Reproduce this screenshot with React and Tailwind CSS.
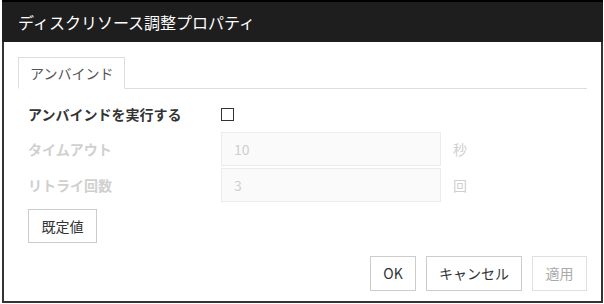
export default function App() {
  const font = { fontFamily: '"Noto Sans CJK JP", "Noto Sans", sans-serif' };
  return (
    <div className="w-[604px] h-[304px] bg-white overflow-hidden" style={font}>
      <div className="ml-[2px] w-[601px] flex flex-col">
        <div className="h-[42px] bg-[#1e1e1e] border-t-2 border-black flex items-center pl-[16px] text-white text-[16px] leading-none">
          ディスクリソース調整プロパティ
        </div>
        <div className="h-[261px] border-x-2 border-b-2 border-[#333] flex flex-col px-[14px] pt-[15px] pb-[10px]">
          <div className="flex border-b border-[#ddd]">
            <div className="h-[32px] -mb-px border border-[#ddd] border-b-white bg-white px-[11px] flex items-center text-[14px] text-[#555]">
              アンバインド
            </div>
          </div>
          <div className="pl-[10px] flex flex-col">
            <div className="h-[34px] mt-[8px] flex items-center">
              <div className="w-[193px] text-[14px] font-bold text-[#333]">アンバインドを実行する</div>
              <div className="w-[13px] h-[13px] border-[1.5px] border-[#333]"></div>
            </div>
            <div className="h-[34px] mt-[1px] flex items-center">
              <div className="w-[193px] text-[14px] font-bold text-[#d0d0d0]">タイムアウト</div>
              <div className="w-[220px] h-[34px] border border-[#ececec] bg-[#fafafa] flex items-center pl-[12px] text-[14px] text-[#cfcfcf]">10</div>
              <div className="ml-[12px] text-[14px] text-[#cfcfcf]">秒</div>
            </div>
            <div className="h-[34px] mt-[2px] flex items-center">
              <div className="w-[193px] text-[14px] font-bold text-[#d0d0d0]">リトライ回数</div>
              <div className="w-[220px] h-[34px] border border-[#ececec] bg-[#fafafa] flex items-center pl-[12px] text-[14px] text-[#cfcfcf]">3</div>
              <div className="ml-[12px] text-[14px] text-[#cfcfcf]">回</div>
            </div>
            <div className="mt-[7px]">
              <div className="w-[69px] h-[34px] border border-[#ccc] flex items-center justify-center text-[14px] text-[#333]">既定値</div>
            </div>
          </div>
          <div className="mt-auto flex justify-end gap-[10px]">
            <div className="w-[46px] h-[35px] border border-[#ccc] flex items-center justify-center text-[14px] text-[#333]">OK</div>
            <div className="w-[96px] h-[35px] border border-[#ccc] flex items-center justify-center text-[14px] text-[#333]">キャンセル</div>
            <div className="w-[55px] h-[35px] border border-[#e0e0e0] flex items-center justify-center text-[14px] text-[#aaa]">適用</div>
          </div>
        </div>
      </div>
    </div>
  );
}
